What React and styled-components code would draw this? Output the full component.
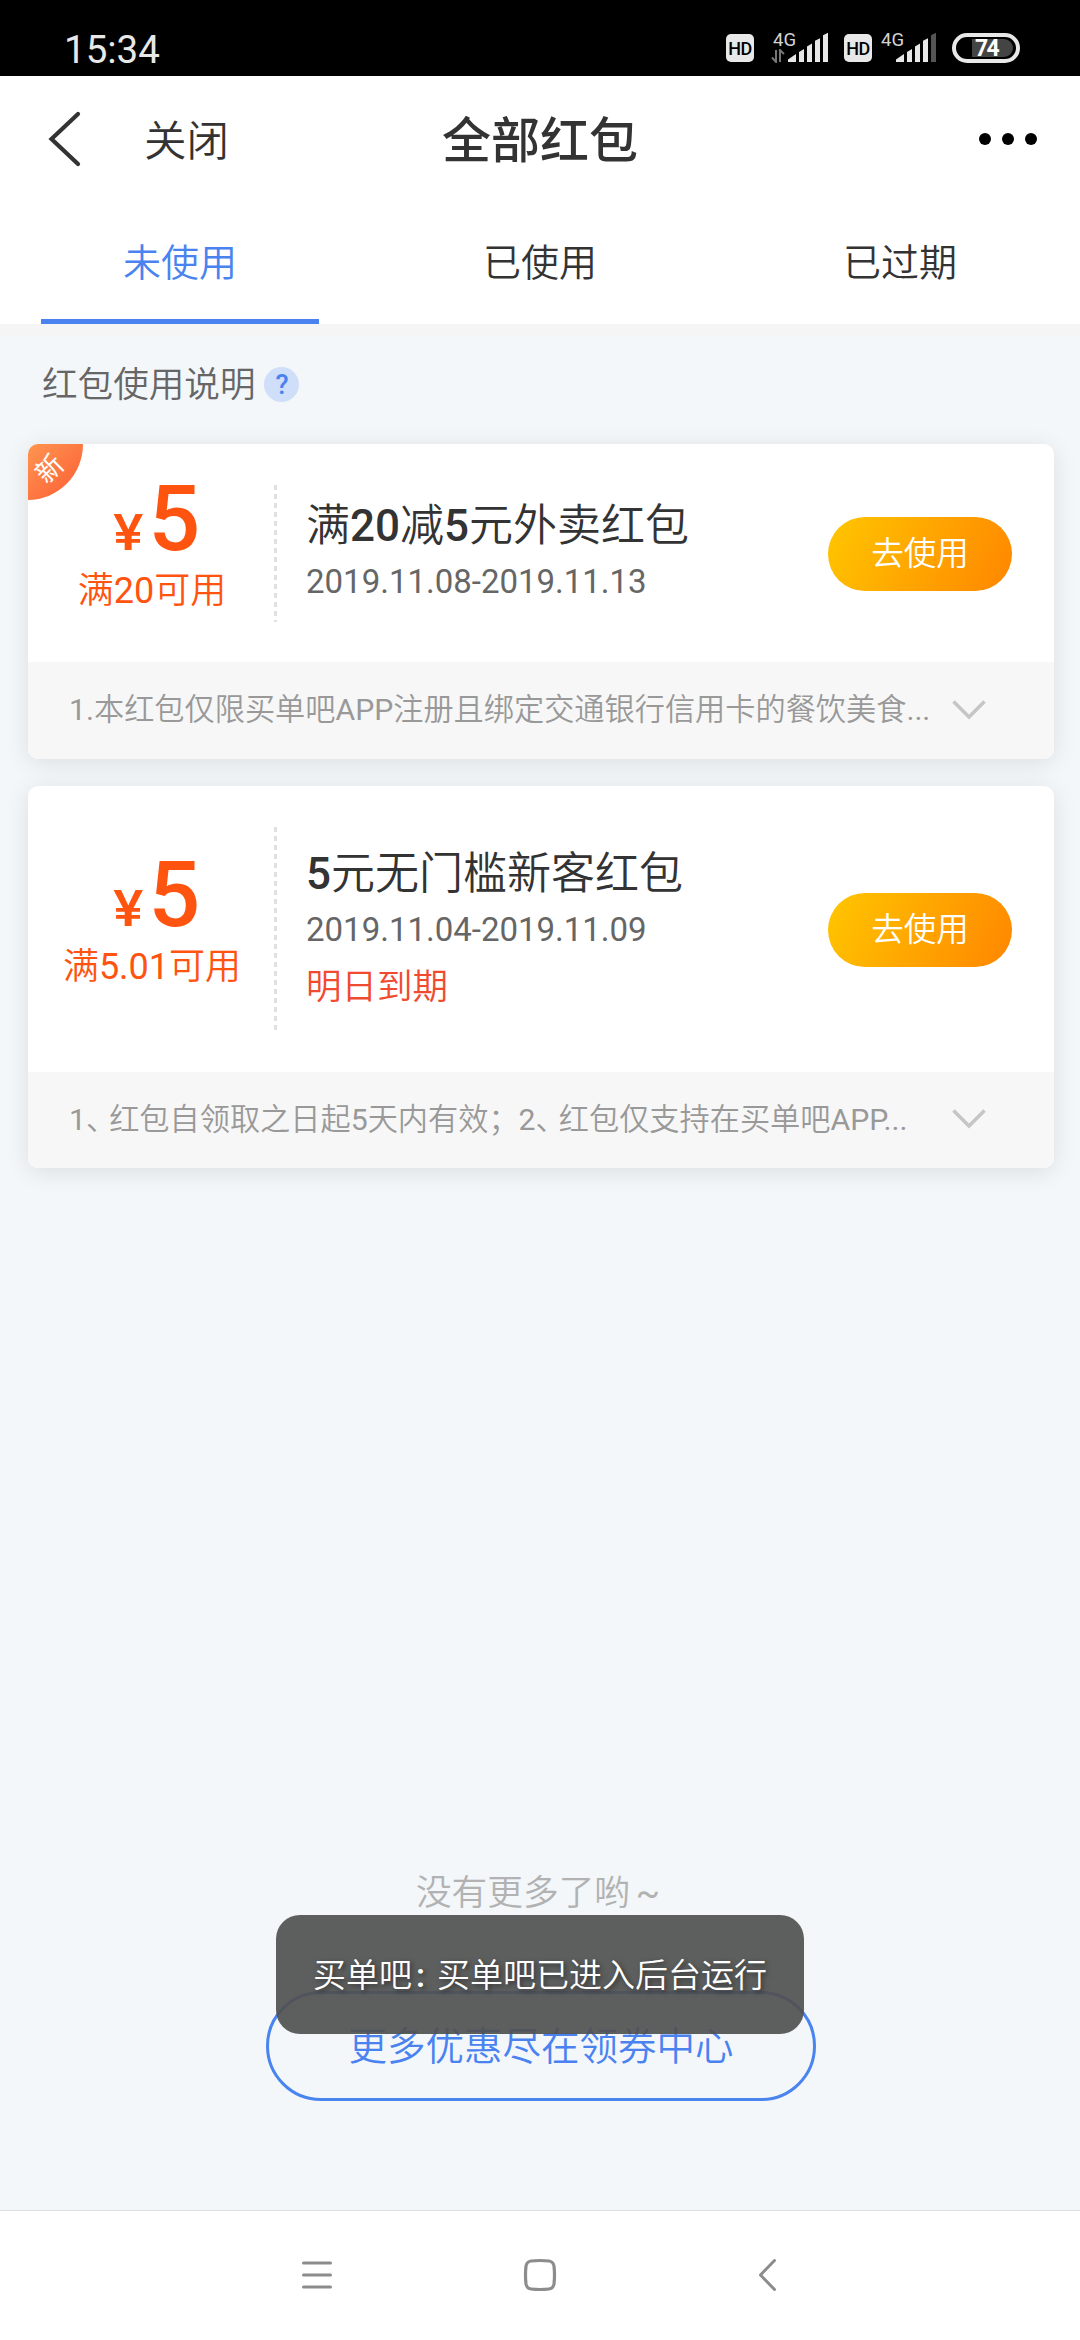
import React from 'react';
import styled, { createGlobalStyle } from 'styled-components';

const GlobalStyle = createGlobalStyle`
  * { box-sizing: border-box; }
  body {
    margin: 0;
    background: #f3f7fa;
    font-family: Roboto, 'Noto Sans CJK SC', sans-serif;
    font-weight: 350;
    color: #333;
  }
  button { font: inherit; border: 0; padding: 0; background: none; color: inherit; }
`;

const Screen = styled.div`
  width: 1080px;
  height: 2340px;
  display: flex;
  flex-direction: column;
  overflow: hidden;
  position: relative;
`;

/* ---------- status bar ---------- */
const StatusBar = styled.div`
  height: 76px;
  flex: none;
  background: #000;
  color: #e8e8e8;
  display: flex;
  justify-content: space-between;
  align-items: flex-start;
  padding: 33px 60px 0 64px;
`;
const Clock = styled.span`
  font-size: 38.5px;
  line-height: 34px;
  font-weight: 400;
`;
const StatusIcons = styled.div`
  display: flex;
  align-items: flex-start;
  height: 32px;
  margin-top: -1px;
`;
const HdBadge = styled.span`
  width: 28px;
  height: 28px;
  margin: 2px ${p => p.$gap}px 0 0;
  border-radius: 5px;
  background: #e8e8e8;
  color: #000;
  font: 500 18px/30px Roboto, sans-serif;
  text-align: center;
  letter-spacing: -0.4px;
`;
const Signal = styled.div`
  display: flex;
  width: ${p => p.$width}px;
  margin-right: 16px;
  height: 32px;
  flex-direction: column;
  svg { display: block; margin-top: -17px; }
`;
const Network = styled.span`
  font: 400 18.5px/16px Roboto, sans-serif;
  height: 16px;
  color: #d4d4d4;
`;
const Battery = styled.div`
  width: 68px;
  height: 30px;
  margin-top: 1px;
  border: 4px solid #e8e8e8;
  border-radius: 15px;
  padding: 2px 3px 2px 16px;
`;
const BatteryLevel = styled.div`
  height: 18px;
  border-radius: 0 9px 9px 0;
  background: #444;
  color: #fff;
  font: 700 23px/19px Roboto, sans-serif;
  letter-spacing: -1.8px;
  padding-left: 3px;
`;

/* ---------- header ---------- */
const Header = styled.header`
  height: 128px;
  flex: none;
  background: #fff;
  display: grid;
  grid-template-columns: 1fr auto 1fr;
  align-items: center;
  padding: 0 43px 2px 47px;
`;
const HeaderLeft = styled.div`
  display: flex;
  align-items: center;
  gap: 61px;
`;
const CloseButton = styled.button`
  font-size: 42.5px;
  line-height: 56px;
  padding-top: 5px;
`;
const Title = styled.h1`
  margin: 0;
  font-size: 49px;
  line-height: 60px;
  font-weight: 500;
  padding: 6px 4px 0 0;
`;
const MoreButton = styled.button`
  justify-self: end;
  display: flex;
  gap: 11px;
`;
const Dot = styled.i`
  width: 12px;
  height: 12px;
  border-radius: 50%;
  background: #000;
`;

/* ---------- tabs ---------- */
const Tabs = styled.nav`
  height: 120px;
  flex: none;
  background: #fff;
  display: grid;
  grid-template-columns: repeat(3, 1fr);
  justify-items: center;
  box-shadow: 0 11px 0 #f5f5f5;
`;
const Tab = styled.button`
  width: 278px;
  height: 120px;
  font-size: 38px;
  line-height: 56px;
  padding: 2px 0 ${p => (p.$active ? 0 : 5)}px;
  color: ${p => (p.$active ? '#4a83f0' : '#333')};
  border-bottom: ${p => (p.$active ? '5px solid #4a83f0' : '0')};
`;

/* ---------- content ---------- */
const Content = styled.main`
  flex: 1;
  display: flex;
  flex-direction: column;
  padding: 0 26px 0 28px;
`;
const HelpRow = styled.div`
  height: 120px;
  display: flex;
  align-items: center;
  gap: 9px;
  padding: 1px 0 0 14px;
  font-size: 35.6px;
  color: #666;
  line-height: 52px;
`;
const HelpIcon = styled.span`
  width: 35px;
  height: 35px;
  border-radius: 50%;
  background: #cfdef9;
  color: #4a83f0;
  font: 500 27px/36px Roboto, sans-serif;
  text-align: center;
`;
const CardList = styled.div`
  display: flex;
  flex-direction: column;
  gap: 27px;
`;
const Card = styled.article`
  position: relative;
  border-radius: 10px;
  background: #fff;
  box-shadow: 0 4px 24px rgba(0, 0, 0, 0.1);
`;
const Ribbon = styled.span`
  position: absolute;
  left: 0;
  top: 0;
  width: 55px;
  height: 56px;
  border-radius: 10px 0 100% 0;
  background: linear-gradient(135deg, #ff9550, #fb5c34);
  color: #fff;
  font-size: 27px;
  font-weight: 400;
  line-height: 28px;
  padding: 11px 0 0 8px;
  span { display: block; width: 28px; text-align: center; transform: rotate(-45deg); }
`;
const CardBody = styled.div`
  height: ${p => p.$height}px;
  display: flex;
  padding: 41px 42px 40px 0;
`;
const Amount = styled.div`
  width: 246px;
  display: flex;
  flex-direction: column;
  align-items: center;
  justify-content: center;
  padding-left: 2px;
  color: #ff5310;
`;
const Price = styled.div`
  display: flex;
  align-items: baseline;
  gap: 7px;
  font: 500 91px/66px Roboto, sans-serif;
  padding: 4px 0 0 11px;
`;
const Currency = styled.span`
  font-size: 50px;
  transform: scaleX(1.13);
`;
const Condition = styled.div`
  font-size: 36px;
  line-height: 44px;
  margin: 3px 0 12px;
`;
const Latin = styled.span`
  font-weight: 400;
`;
const Divider = styled.i`
  width: 3px;
  background: repeating-linear-gradient(#e0e0e0 0 5px, #fff 5px 9px);
`;
const Info = styled.div`
  flex: 1;
  padding: 0 0 3px 29px;
  display: flex;
  flex-direction: column;
  justify-content: center;
`;
const CouponName = styled.h2`
  margin: 0;
  font-size: 44px;
  line-height: 60px;
  font-weight: 350;
  b { font-weight: 500; }
`;
const Period = styled.div`
  font-size: 33px;
  line-height: 52px;
  font-weight: 400;
  color: #666;
`;
const Expiry = styled.div`
  font-size: 35.5px;
  line-height: 52px;
  padding-top: 5px;
  color: #f04a30;
`;
const UseButton = styled.button`
  align-self: center;
  width: 184px;
  height: 74px;
  border-radius: 37px;
  background: linear-gradient(115deg, #ffc600, #ff8600);
  color: #fff;
  font-size: 32.5px;
  line-height: 72px;
`;
const Rules = styled.div`
  height: ${p => p.$height}px;
  border-radius: 0 0 10px 10px;
  background: #f7f7f7;
  color: #999;
  display: flex;
  align-items: center;
  justify-content: space-between;
  padding: 0 68px 2px 41px;
  font-size: 30.2px;
  line-height: 44px;
  white-space: nowrap;
  svg { flex: none; }
`;
const RuleText = styled.span`
  padding-top: 1px;
`;
const Comma = styled.span`
  letter-spacing: -7px;
`;

const EndNote = styled.p`
  margin: auto 0 0;
  text-align: center;
  font-size: 35.7px;
  line-height: 52px;
  color: #b2b2b2;
  word-spacing: -3px;
  padding-right: 6px;
`;
const MoreCoupons = styled.button`
  align-self: center;
  width: 550px;
  height: 110px;
  margin: 72px 0 109px;
  border: 3px solid #4a84ee;
  border-radius: 55px;
  color: #4a83f0;
  font-size: 38.5px;
  padding-bottom: 6px;
`;
const Toast = styled.div`
  position: absolute;
  left: 276px;
  top: 1915px;
  width: 528px;
  height: 119px;
  border-radius: 24px;
  background: rgba(80, 80, 80, 0.92);
  color: #fff;
  font-size: 33px;
  line-height: 119px;
  padding-top: 1px;
  text-align: center;
  text-shadow: 2px 2px 5px rgba(0, 0, 0, 0.5);
  white-space: nowrap;
`;
const Colon = styled.span`
  display: inline-block;
  width: 25px;
  padding-right: 8px;
  font-weight: 600;
`;

/* ---------- system navigation ---------- */
const SystemNav = styled.footer`
  height: 130px;
  flex: none;
  background: #fff;
  border-top: 1px solid #dfdfdf;
  display: flex;
  justify-content: space-between;
  align-items: center;
  padding: 0 300px 1px 300px;
`;

function Bars({ weak }) {
  const xs = [11, 19, 27, 35];
  return (
    <svg width="42" height="34" viewBox="0 0 42 34" fill="#e8e8e8">
      <path d="M0 31V28.500L8 23V31Z" />
      {xs.map((x, i) => (
        <path
          key={x}
          fill={weak && i === 3 ? '#555' : undefined}
          d={`M${x} 31V${21 - i * 5.6}L${x + 5} ${18 - i * 5.4}V31Z`}
        />
      ))}
    </svg>
  );
}

const Arrows = styled.svg`
  position: absolute;
  left: 771px;
  top: 49px;
`;
const BarsSlot = styled.div`
  margin-left: ${p => p.$left}px;
`;

function Chevron() {
  return (
    <svg width="34" height="20" viewBox="0 0 34 20" fill="none" stroke="#c6c6c6" strokeWidth="3.6">
      <path d="M1.500 1.500L17 17L32.500 1.500" />
    </svg>
  );
}

const coupons = [
  {
    isNew: true,
    condition: <>满<Latin>20</Latin>可用</>,
    name: <>满<b>20</b>减<b>5</b>元外卖红包</>,
    period: '2019.11.08-2019.11.13',
    rules: <><Latin>1.</Latin>本红包仅限买单吧<Latin>APP</Latin>注册且绑定交通银行信用卡的餐饮美食<Latin>...</Latin></>,
    body: 218,
    foot: 97,
  },
  {
    condition: <>满<Latin>5.01</Latin>可用</>,
    name: <><b>5</b>元无门槛新客红包</>,
    period: '2019.11.04-2019.11.09',
    expiry: '明日到期',
    rules: <><Latin>1</Latin><Comma>、</Comma>红包自领取之日起<Latin>5</Latin>天内有效；<Latin>2</Latin><Comma>、</Comma>红包仅支持在买单吧<Latin>APP...</Latin></>,
    body: 286,
    foot: 96,
  },
];

function Coupon({ data }) {
  return (
    <Card>
      <CardBody $height={data.body}>
        <Amount>
          <Price><Currency>¥</Currency>5</Price>
          <Condition>{data.condition}</Condition>
        </Amount>
        <Divider />
        <Info>
          <CouponName>{data.name}</CouponName>
          <Period>{data.period}</Period>
          {data.expiry && <Expiry>{data.expiry}</Expiry>}
        </Info>
        <UseButton>去使用</UseButton>
      </CardBody>
      <Rules $height={data.foot}>
        <RuleText>{data.rules}</RuleText>
        <Chevron />
      </Rules>
      {data.isNew && <Ribbon><span>新</span></Ribbon>}
    </Card>
  );
}

export default function App() {
  return (
    <Screen>
      <GlobalStyle />
      <StatusBar>
        <Clock>15:34</Clock>
        <StatusIcons>
          <HdBadge $gap={19}>HD</HdBadge>
          <Signal $width={55}>
            <Network>4G</Network>
            <BarsSlot $left={15}><Bars /></BarsSlot>
          </Signal>
          <HdBadge $gap={9}>HD</HdBadge>
          <Signal $width={55}>
            <Network>4G</Network>
            <BarsSlot $left={15}><Bars weak /></BarsSlot>
          </Signal>
          <Battery><BatteryLevel>74</BatteryLevel></Battery>
        </StatusIcons>
        <Arrows width="14" height="14" viewBox="0 0 14 14" fill="none" stroke="#777" strokeWidth="2">
          <path d="M5 1V13L1 8.500M9 13V1L13 5" />
        </Arrows>
      </StatusBar>

      <Header>
        <HeaderLeft>
          <svg width="36" height="56" viewBox="0 0 36 56" fill="none" stroke="#333" strokeWidth="4.2" strokeLinecap="round">
            <path d="M31 3L4.500 28L31 53" />
          </svg>
          <CloseButton>关闭</CloseButton>
        </HeaderLeft>
        <Title>全部红包</Title>
        <MoreButton><Dot /><Dot /><Dot /></MoreButton>
      </Header>

      <Tabs>
        <Tab $active>未使用</Tab>
        <Tab>已使用</Tab>
        <Tab>已过期</Tab>
      </Tabs>

      <Content>
        <HelpRow>
          红包使用说明
          <HelpIcon>?</HelpIcon>
        </HelpRow>
        <CardList>
          {coupons.map(c => <Coupon key={c.period} data={c} />)}
        </CardList>
        <EndNote>没有更多了哟 <Latin>~</Latin></EndNote>
        <MoreCoupons>更多优惠尽在领券中心</MoreCoupons>
      </Content>

      <SystemNav>
        <svg width="34" height="34" viewBox="0 0 34 34" stroke="#8c8c8c" strokeWidth="3" strokeLinecap="round">
          <path d="M3.500 5H30.500M3.500 17H30.500M3.500 29H30.500" />
        </svg>
        <svg width="34" height="34" viewBox="0 0 34 34" fill="none" stroke="#8c8c8c" strokeWidth="3.200">
          <path d="M8 3Q17 2 26 3Q30 3.500 31 8Q32 17 31 26Q30 30.500 26 31Q17 32 8 31Q4 30.500 3 26Q2 17 3 8Q4 3.500 8 3Z" />
        </svg>
        <svg width="34" height="34" viewBox="0 0 34 34" fill="none" stroke="#8c8c8c" strokeWidth="3" strokeLinecap="round" strokeLinejoin="round">
          <path d="M28.500 2.500L14.500 17L28.500 31.500" />
        </svg>
      </SystemNav>

      <Toast>买单吧<Colon>:</Colon>买单吧已进入后台运行</Toast>
    </Screen>
  );
}
